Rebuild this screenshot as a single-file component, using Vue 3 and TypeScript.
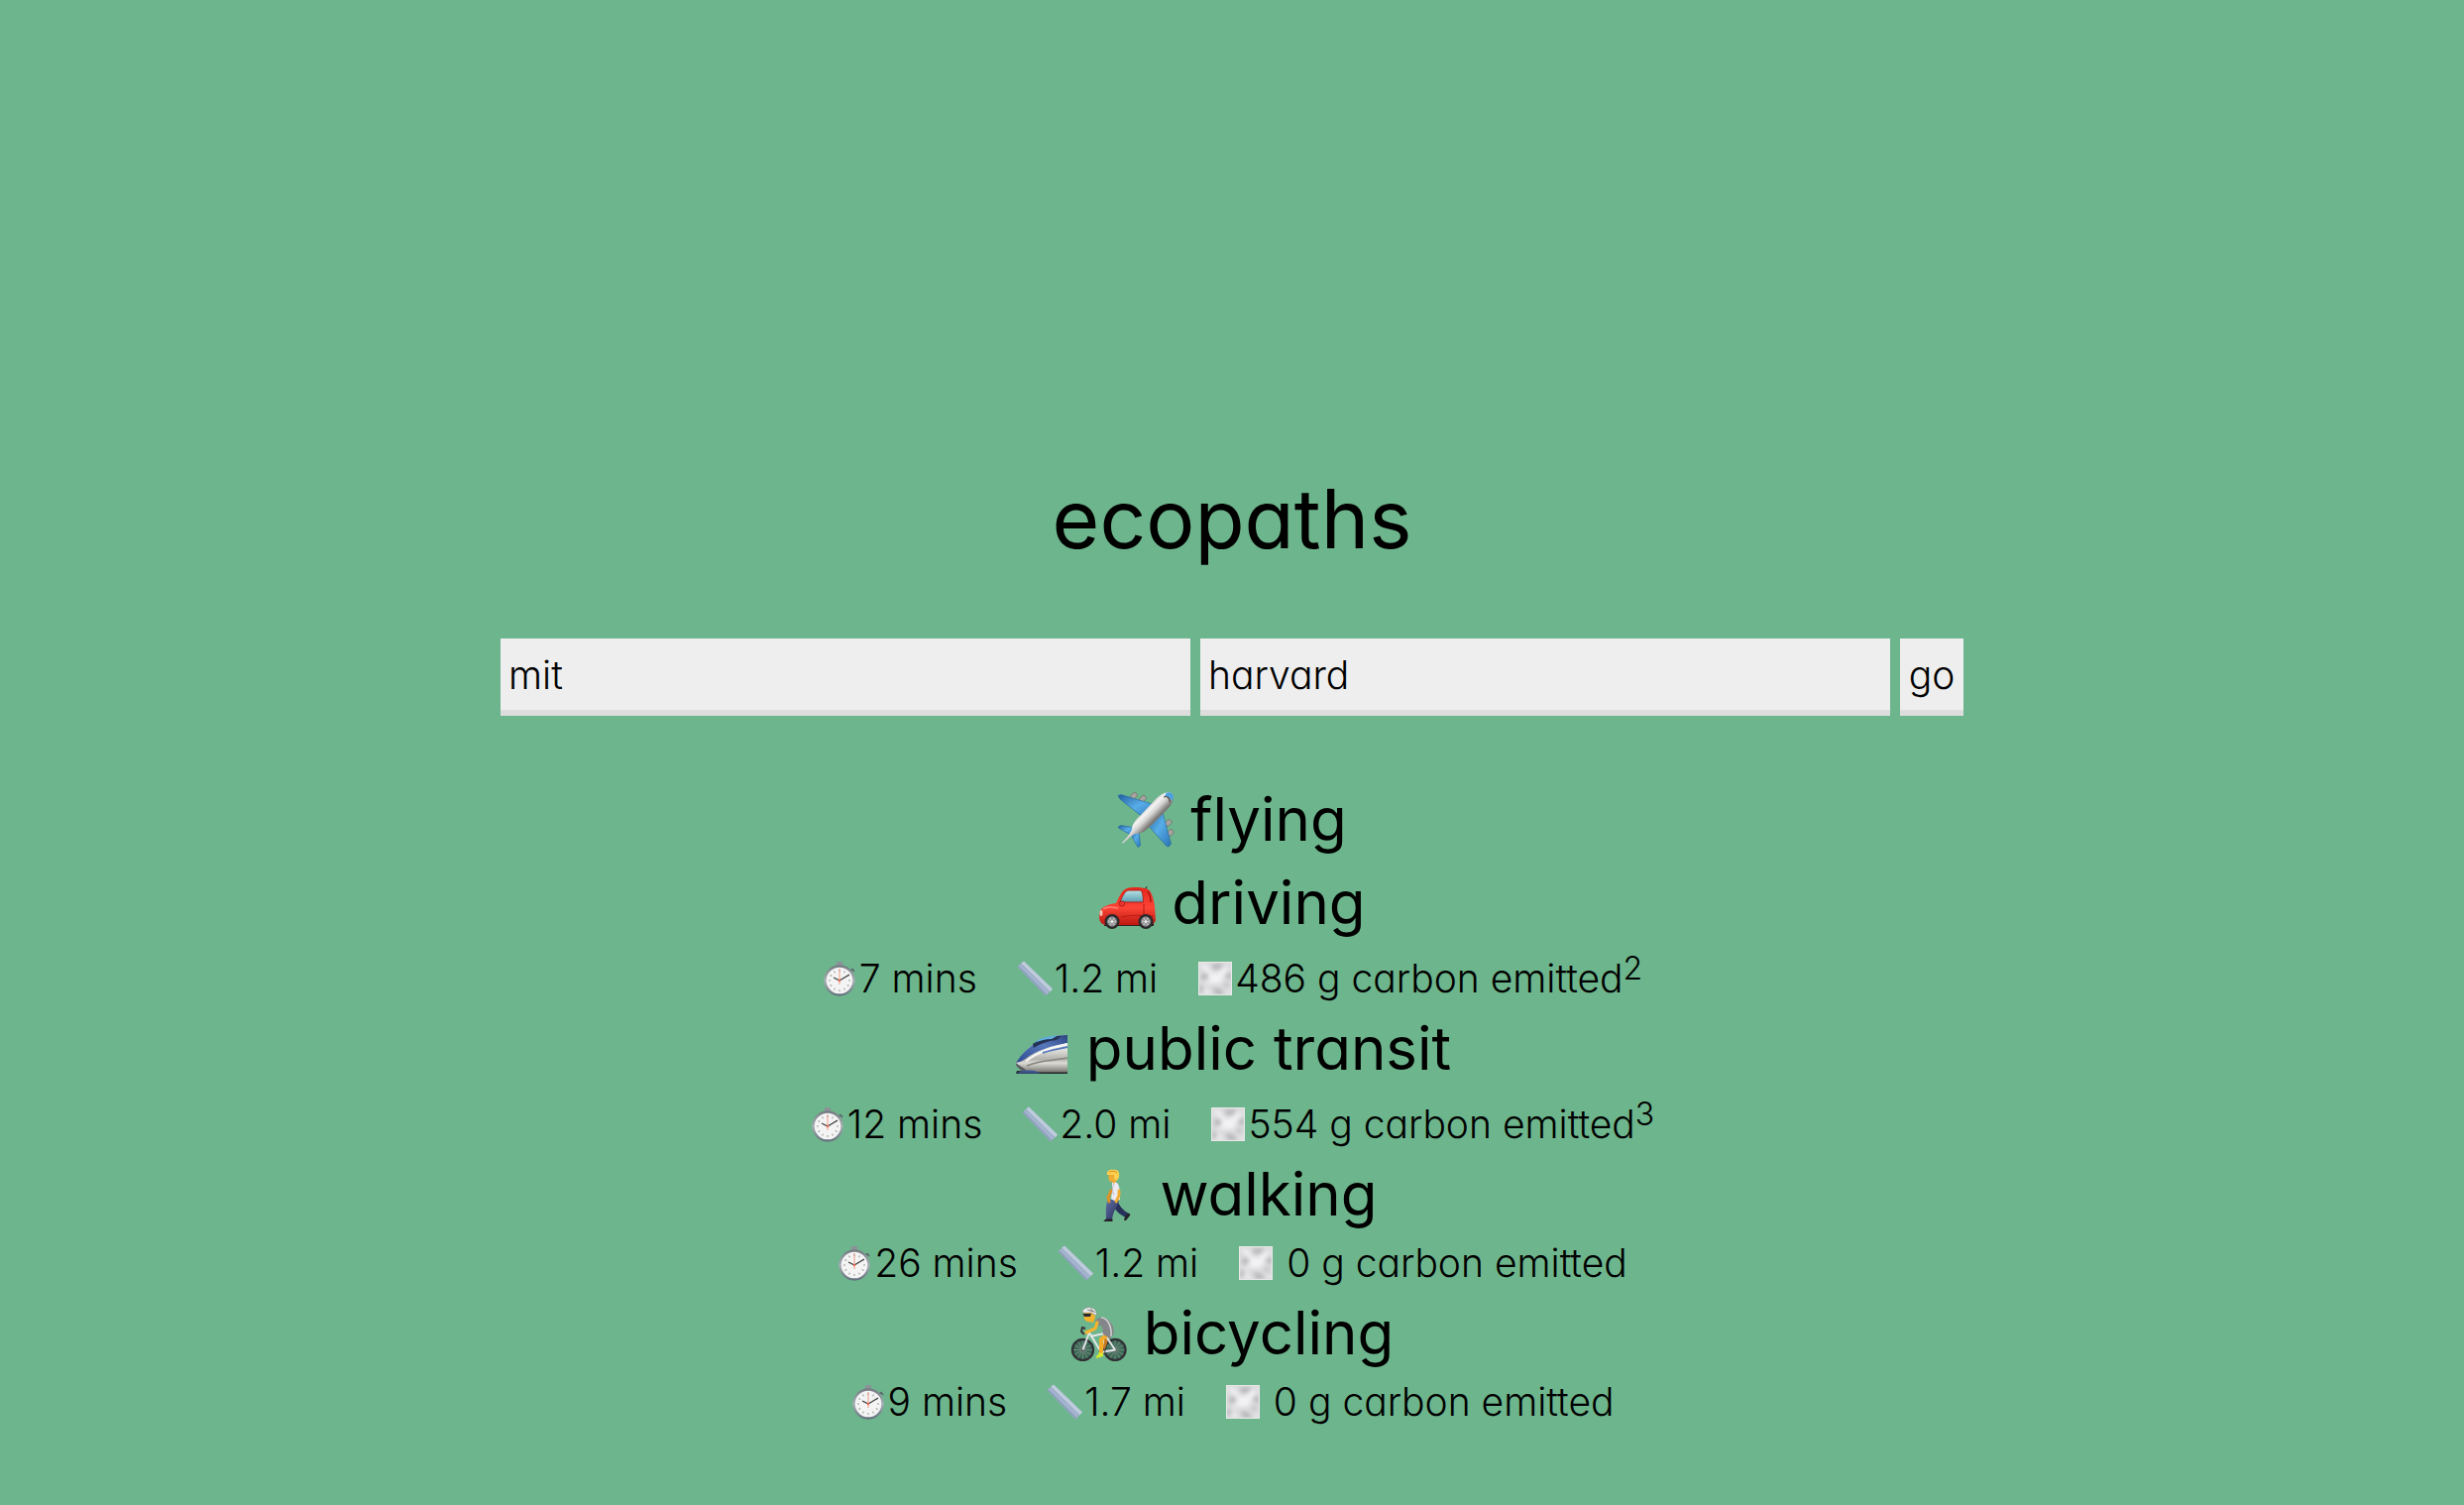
<script setup lang="ts">
import { ref } from 'vue'

interface Route {
  mode: string
  icon: string
  time?: string
  distance?: string
  carbon?: string
  note?: string
}

const origin = ref('mit')
const destination = ref('harvard')

const routes: Route[] = [
  { mode: 'flying', icon: 'plane' },
  { mode: 'driving', icon: 'car', time: '7 mins', distance: '1.2 mi', carbon: '486 g carbon emitted', note: '2' },
  { mode: 'public transit', icon: 'train', time: '12 mins', distance: '2.0 mi', carbon: '554 g carbon emitted', note: '3' },
  { mode: 'walking', icon: 'walker', time: '26 mins', distance: '1.2 mi', carbon: ' 0 g carbon emitted' },
  { mode: 'bicycling', icon: 'cyclist', time: '9 mins', distance: '1.7 mi', carbon: ' 0 g carbon emitted' },
]

const ticks = Array.from({ length: 12 }, (_, i) => i * 30)
const spokes = Array.from({ length: 6 }, (_, i) => i * 30)
</script>

<template>
  <main class="page">
    <svg class="sprite" aria-hidden="true">
      <defs>
        <linearGradient id="fuselage" gradientUnits="userSpaceOnUse" x1="24" y1="18" x2="37" y2="31">
          <stop offset="0" stop-color="#aaa8a6" /><stop offset="0.4" stop-color="#f4f4f4" />
          <stop offset="0.65" stop-color="#d4d3d2" /><stop offset="1" stop-color="#7b7775" />
        </linearGradient>
        <linearGradient id="wing" x1="0" y1="0" x2="1" y2="1">
          <stop offset="0" stop-color="#1f5f9e" /><stop offset="0.5" stop-color="#58ade8" /><stop offset="1" stop-color="#2a72b5" />
        </linearGradient>
        <linearGradient id="paint" x1="0" y1="0" x2="0" y2="1">
          <stop offset="0" stop-color="#e8261c" /><stop offset="0.55" stop-color="#fb4436" /><stop offset="1" stop-color="#bd170f" />
        </linearGradient>
        <linearGradient id="glass" x1="0" y1="0" x2="0" y2="1">
          <stop offset="0" stop-color="#b6e2e6" /><stop offset="1" stop-color="#5a9db0" />
        </linearGradient>
        <linearGradient id="steel" x1="0" y1="0" x2="0" y2="1">
          <stop offset="0.3" stop-color="#f1f1ee" /><stop offset="0.65" stop-color="#b4b2ac" />
          <stop offset="0.75" stop-color="#dddbd6" /><stop offset="1" stop-color="#77756f" />
        </linearGradient>
        <linearGradient id="livery" x1="0" y1="1" x2="1" y2="0">
          <stop offset="0" stop-color="#2d4c91" /><stop offset="0.6" stop-color="#5878bb" /><stop offset="1" stop-color="#2c4380" />
        </linearGradient>
        <linearGradient id="denim" x1="0" y1="0" x2="1" y2="1">
          <stop offset="0" stop-color="#5f6ea6" /><stop offset="1" stop-color="#263057" />
        </linearGradient>
        <linearGradient id="rim" x1="0" y1="0" x2="0" y2="1">
          <stop offset="0" stop-color="#777d84" /><stop offset="0.5" stop-color="#a9afb6" /><stop offset="1" stop-color="#66727e" />
        </linearGradient>
        <filter id="soft" x="-50%" y="-50%" width="200%" height="200%"><feGaussianBlur stdDeviation="2" /></filter>
        <clipPath id="tile"><rect x="1" y="1" width="34" height="34" /></clipPath>
      </defs>

      <symbol id="plane" viewBox="0 0 58 58">
        <g fill="#a7a3a0" stroke="#66615e" stroke-width="0.6">
          <rect x="13" y="3" width="7" height="5" rx="2" transform="rotate(-45 17 5)" />
          <rect x="22" y="6" width="7" height="5" rx="2" transform="rotate(-45 26 8)" />
          <rect x="48" y="31" width="7" height="5" rx="2" transform="rotate(-45 51 33)" />
          <rect x="50" y="41" width="7" height="5" rx="2" transform="rotate(-45 53 43)" />
        </g>
        <path d="M1 5.5 4 4.5 39 15 27 28 3 9Z" fill="url(#wing)" stroke="#25679f" stroke-width="0.6" />
        <path d="M45 19 54.5 54 52 57 50 56.500 30 34Z" fill="url(#wing)" stroke="#25679f" stroke-width="0.6" />
        <path d="M1 37 4 35.500 19 38 14 45 2 38.500Z" fill="url(#wing)" stroke="#25679f" stroke-width="0.6" />
        <path d="M22 40 23.500 56 21 57.500 14 45Z" fill="url(#wing)" stroke="#25679f" stroke-width="0.6" />
        <path d="M5 53 C10 48 12 45 15 40 C15 34 19 30 24 25 L39 9 C44 4 51 1 55 3 C58 6 57 12 52 18 L34 36 C28 42 24 44 18 44 C13 47 9 51 6 54Z" fill="url(#fuselage)" />
        <path d="M50 2.500 C54 1.500 57 3 57 7 L56 11 C54 8 51 6 48 6Z" fill="#4ba0df" />
        <path d="M47 7 C50 5.500 54 8 53 12" fill="none" stroke="#4d4643" stroke-width="1.200" />
      </symbol>

      <symbol id="car" viewBox="0 0 58 58">
        <path d="M6 49 H56 V53 H6Z" fill="#35201d" />
        <path d="M47 17 49 13.500" stroke="#333" stroke-width="1.500" />
        <path d="M2 38 C3 34 10 31 18 30 C22 22 24 17 29 15 C34 13.500 44 13.500 50 16 C54 18 56 26 57 33 L58 47 C57 51 54 52 48 52 H7 C1 51 0 44 2 38Z" fill="url(#paint)" />
        <path d="M22 29 C24 23 27 18 30 17 H43 C45 19 45.500 24 45.500 29Z" fill="url(#glass)" stroke="#b11c15" stroke-width="1" />
        <path d="M50 18 C52 21 53 25 53 29" fill="none" stroke="#8e1410" stroke-width="1.200" />
        <path d="M23 44 C32 42 40 42 56 43M46 31 46 42" fill="none" stroke="#bc1913" stroke-width="1" />
        <path d="M5 36 C9 33 16 34 20 35" fill="none" stroke="#ff8177" stroke-width="1.500" />
        <ellipse cx="3" cy="40" rx="1.500" ry="3" fill="#f2c6b6" />
        <ellipse cx="24" cy="30.500" rx="2.800" ry="2.500" fill="#ed352b" stroke="#971610" stroke-width="0.700" />
        <g v-for="x in [14, 48]" :key="x">
          <circle :cx="x" cy="48.500" r="7.500" fill="#29282a" />
          <circle :cx="x" cy="48.500" r="4.800" fill="#b7b7b9" stroke="#707074" />
          <path :d="`M${x} 44v9M${x - 4} 46l8 5M${x - 4} 51l8-5`" stroke="#67676b" stroke-width="0.800" />
          <circle :cx="x" cy="48.500" r="1.500" fill="#eee" />
        </g>
      </symbol>

      <symbol id="train" viewBox="0 0 58 58">
        <path d="M4 52 25 53 55 51 V55 H3Z" fill="#24252b" />
        <path d="M3 44 C9 36 17 26 29 20 C37 17 47 16 55 16 V53.500 C42 53.500 22 54 10 52 C7 50 5 47 3 46Z" fill="url(#steel)" />
        <path d="M3 44 C8 36 18 25 30 20 C37 17 46 16 55 16 V24 C39 27 24 31 11 41 C8 43 5 43.500 3 44Z" fill="url(#livery)" />
        <path d="M20 25 C27 19 35 17 49 17 L44 21 C35 22 27 25 21 29Z" fill="#253355" />
        <path d="M21 24 C27 19 34 17 45 16.500 L39 20 C32 20 27 22 21 24Z" fill="#62b0dd" />
        <path d="M12 42 C24 32 39 28 55 24 V26 C39 30 26 34 14 43Z" fill="#f6f6f4" />
        <path d="M30 34 C38 31 47 30 55 28" fill="none" stroke="#5878bb" stroke-width="2" />
        <path d="M14 47 C27 41 40 42 55 39" fill="none" stroke="#85847f" stroke-width="1.500" />
        <path d="M3 44 C6 47 10 48 14 52L9 52C6 50 4 48 3 46Z" fill="#595b60" />
        <path d="M3 54.500 C12 50 22 51 28 54.500Z" fill="#3b5794" />
      </symbol>

      <symbol id="walker" viewBox="0 0 58 58">
        <path d="M30 35 C32 41 36 46 42 49 L39 53 C32 50 27 45 24 36Z" fill="#27315a" />
        <path d="M42 48.500 43.500 50.500 39 56 H37 L38 52Z" fill="#252128" />
        <path d="M21 35 H32 C31 42 26 46 25 55 H19 C19 47 18 41 21 35Z" fill="url(#denim)" />
        <path d="M18.500 54.500 H25.500 V57 H16.500 C16.500 56 18 55.500 18.500 54.500Z" fill="#252128" />
        <path d="M24 26 21 33 22 37" fill="none" stroke="#dc9128" stroke-width="3" stroke-linecap="round" />
        <path d="M25 18 C29 16 32 19 32.500 24 L33 35 C29 37 26 36 24 34 L25 27Z" fill="#eceaf0" />
        <path d="M32 26 32 31 29 37" fill="none" stroke="#f1ad30" stroke-width="2.800" stroke-linecap="round" stroke-linejoin="round" />
        <path d="M27 19 C25 22 25 28 27 30" stroke="#bab7c4" fill="none" />
        <path d="M22 9 C21 13 21 17 25 17 L27 19 L30 15 32 9Z" fill="#edac32" />
        <path d="M20 10 C19 6 23 4 26 5 C31 4 33 8 32 12 L30 16 27 14 27 10Z" fill="#ffcf50" />
        <path d="M22 7 C25 6 29 6 30 8" fill="none" stroke="#d28e24" />
      </symbol>

      <symbol id="cyclist" viewBox="0 0 58 58">
        <g v-for="x in [12.5, 45]" :key="x">
          <circle :cx="x" cy="46.500" r="10.500" fill="#3d6b56" stroke="#303237" stroke-width="2.400" />
          <path v-for="a in spokes" :key="a" :d="`M${x} 37v19`" stroke="#84938c" stroke-width="0.700" :transform="`rotate(${a} ${x} 46.5)`" />
          <circle :cx="x" cy="46.500" r="1.800" fill="#555" />
        </g>
        <path d="M38 30 33 45" fill="none" stroke="#c77c20" stroke-width="4" />
        <path d="M12.500 46.500 19 29 31 49 45 46.500 34 30 20 33M34 31 31 49" fill="none" stroke="#e3e5e8" stroke-width="2" stroke-linejoin="round" />
        <circle cx="32" cy="48" r="3" fill="none" stroke="#555" />
        <path d="M38 31 31 36 31 49" fill="none" stroke="#f3ac27" stroke-width="4" stroke-linecap="round" stroke-linejoin="round" />
        <path d="M29 49 33 50 33 53 26 55 C25 53 28 52 29 49Z" fill="#d9e72d" />
        <path d="M25 17 C30 11 38 14 42 21 C45 27 44 32 40 35 L33 31 32 23 26 21Z" fill="#858689" />
        <path d="M31 14 C38 14 42 24 41 33" fill="none" stroke="#d2d2d4" stroke-width="1.500" />
        <path d="M27 19 25 25 16 29" fill="none" stroke="#f5b42e" stroke-width="3.200" stroke-linecap="round" stroke-linejoin="round" />
        <path d="M14 31 11 28 12 24 15 25" fill="none" stroke="#39363a" stroke-width="2" />
        <path d="M14 9 C13 14 14 18 18 18 L23 19 25 14 24 8Z" fill="#f4b22e" />
        <path d="M12.500 10 H21 L20 13 H14Z" fill="#292b31" />
        <path d="M12 9 C12 5 17 3 21 4 C25 5 27 8 26 12 L21 9Z" fill="#eceded" stroke="#888" stroke-width="0.600" />
        <path d="M17 6 23 8M20 5 25 9" stroke="#777" />
      </symbol>

      <symbol id="clock" viewBox="0 0 36 36">
        <path d="M15 1 H21 V5 H20 V7 H16 V5 H15Z" fill="#8c9299" />
        <path d="M28 11 31 8.500 33 11" fill="none" stroke="#59636b" stroke-width="1.500" />
        <circle cx="18" cy="20" r="14.500" fill="#f4f4f4" stroke="url(#rim)" stroke-width="2.400" />
        <path v-for="a in ticks" :key="a" d="M18 9v2" stroke="#98999b" stroke-width="1" :transform="`rotate(${a} 18 20)`" />
        <path d="M12 17 18 20 28 14" fill="none" stroke="#3b3d40" stroke-width="1.200" />
        <path d="M18 8 V24" stroke="#f09a86" stroke-width="1" />
        <circle cx="18" cy="20" r="1.200" fill="#ee6951" />
      </symbol>

      <symbol id="ruler" viewBox="0 0 36 36">
        <path d="M0.500 6 7 0.500 36 28.500 29 35.500Z" fill="#a5b5cf" />
        <path d="M4 3 7 0.500 36 28.500 33 31.500Z" fill="#becbdd" />
        <path d="M0.500 6 2 5 30.500 34 29 35.500Z" fill="#8ea0bd" />
        <path d="M4 3 33 31.500" stroke="#8193b2" stroke-width="0.700" />
      </symbol>

      <symbol id="fog" viewBox="0 0 36 36">
        <rect x="1" y="1" width="34" height="34" fill="#dcdcde" />
        <g clip-path="url(#tile)">
          <g filter="url(#soft)">
            <path d="M14 4 26 3 24 8 17 9ZM28 13 34 12 34 19 30 18ZM4 14 12 12 10 18 5 20ZM15 27 24 29 27 34 19 34ZM2 26 6 25 6 31 2 32ZM26 22 32 24 30 28Z" fill="#b2b2b7" />
            <path d="M2 4 9 4 14 12 20 13 28 6 32 8 26 16 24 22 17 23 10 22 8 28 13 33 7 34 8 24 13 17 8 9ZM29 30 35 31 34 34Z" fill="#f3f3f5" />
          </g>
        </g>
        <rect x="1.500" y="1.500" width="33" height="33" fill="none" stroke="#e9e9ea" />
      </symbol>
    </svg>

    <h1 class="title">ecopaths</h1>

    <form class="search" @submit.prevent>
      <input v-model="origin" class="field" type="text" aria-label="Starting point" />
      <input v-model="destination" class="field" type="text" aria-label="Destination" />
      <button class="go" type="submit">go</button>
    </form>

    <section v-for="route in routes" :key="route.mode" class="route">
      <h2 class="mode">
        <svg class="mode-icon" aria-hidden="true"><use :href="`#${route.icon}`" /></svg>
        <span>{{ route.mode }}</span>
      </h2>
      <div v-if="route.time" class="details" :class="{ noted: route.note }">
        <span class="fact"><svg class="fact-icon" aria-hidden="true"><use href="#clock" /></svg>{{ route.time }}</span>
        <span class="fact"><svg class="fact-icon" aria-hidden="true"><use href="#ruler" /></svg>{{ route.distance }}</span>
        <span class="fact"><svg class="fact-icon" aria-hidden="true"><use href="#fog" /></svg>{{ route.carbon }}<sup v-if="route.note" class="note">{{ route.note }}</sup></span>
      </div>
    </section>
  </main>
</template>

<style>
body {
  background: #6db58c;
}
</style>

<style scoped>
.page {
  box-sizing: border-box;
  min-height: 100vh;
  padding: 30vh 24px 48px;
  color: #000;
  font-family: Inter, "Open Sans", sans-serif;
  font-feature-settings: "cv11" 1;
  font-size: 39px;
  font-weight: 300;
}

.sprite {
  position: absolute;
  width: 0;
  height: 0;
}

.title {
  margin: 12px 0 63px;
  font-size: 82px;
  font-weight: 400;
  line-height: 114px;
  text-align: center;
}

.search {
  display: flex;
  gap: 10px;
  max-width: 1476px;
  margin: 0 auto 62px;
}

.field,
.go {
  box-sizing: border-box;
  height: 78px;
  margin: 0;
  border: 0;
  border-bottom: 6px solid #ddd;
  border-radius: 0;
  background: #eee;
  color: inherit;
  font: inherit;
  font-feature-settings: inherit;
}

.field {
  flex: 1 1 0;
  min-width: 0;
  padding: 0 8px;
  outline: none;
}

.go {
  flex: 0 0 64px;
  padding: 0;
  cursor: pointer;
}

.mode {
  display: flex;
  justify-content: center;
  align-items: center;
  gap: 16px;
  margin: 0;
  font-size: 60px;
  font-weight: 400;
  line-height: 84px;
}

.mode-icon {
  flex: none;
  width: 58px;
  height: 58px;
}

.details {
  display: flex;
  justify-content: center;
  gap: 40px;
  line-height: 56px;
}

.noted {
  padding-top: 7px;
}

.fact {
  display: flex;
  align-items: center;
  white-space: pre;
}

.fact-icon {
  flex: none;
  width: 36px;
  height: 36px;
  margin-right: 2px;
}

.note {
  align-self: flex-start;
  margin-top: -10px;
  font-size: 32px;
  line-height: 56px;
}
</style>
